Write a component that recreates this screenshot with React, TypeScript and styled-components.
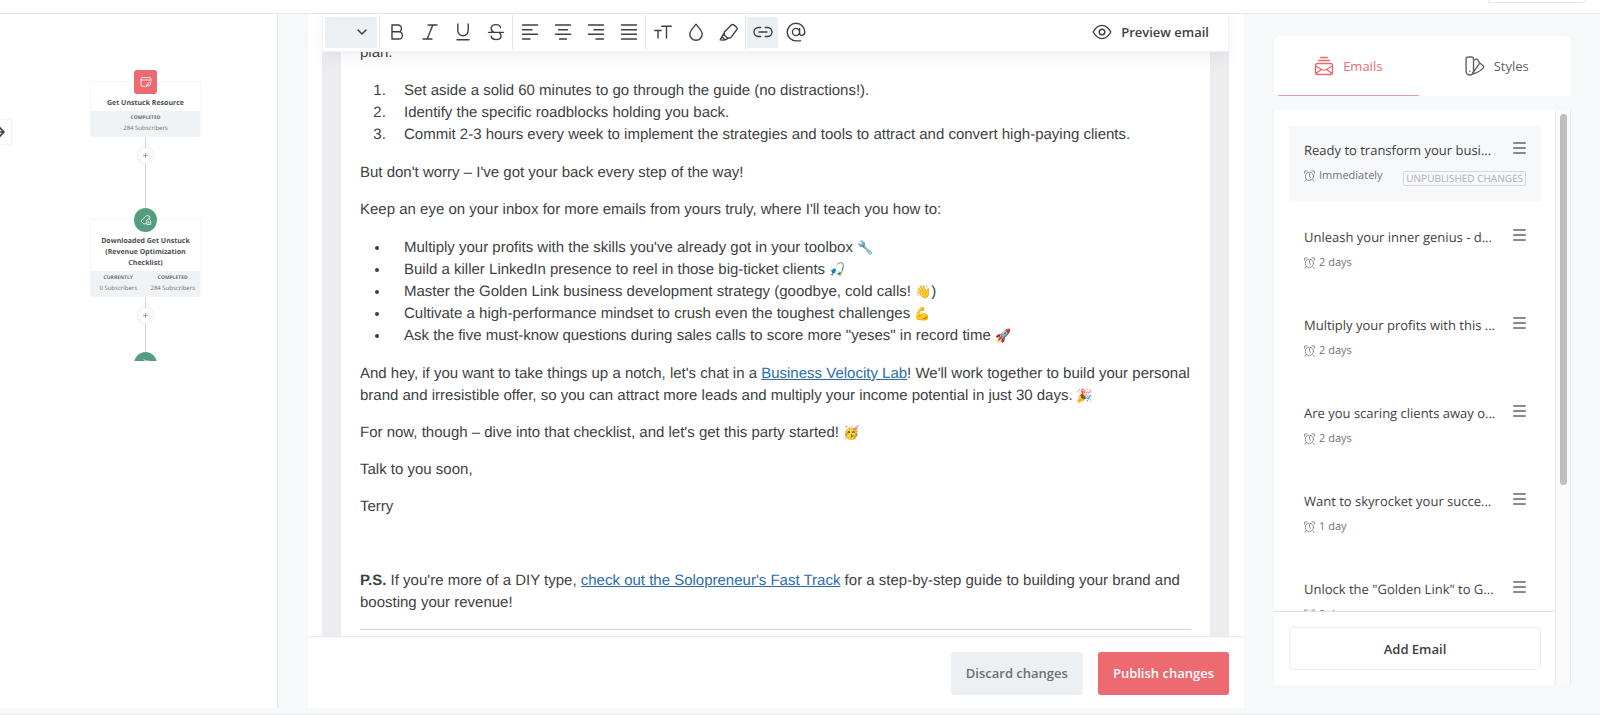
import React from "react";
import styled, { createGlobalStyle, css } from "styled-components";

const sans = `"Open Sans", "Noto Sans", sans-serif`;
const ink = "#3d3f42";
const line = "#e6e8ea";
const canvas = "#f6f8f9";
const coral = "#ec6a70";
const green = "#569d80";

const GlobalStyle = createGlobalStyle`
  *, *::before, *::after { box-sizing: border-box; }
  body { margin: 0; background: ${canvas}; font-family: ${sans}; color: ${ink}; text-rendering: geometricPrecision; }
  button { font: inherit; color: inherit; border: 0; background: none; padding: 0; cursor: pointer; }
  p, ol, ul, h2, h3 { margin: 0; }
`;

const Page = styled.div`
  display: flex;
  flex-direction: column;
  height: 100vh;
  overflow: hidden;
`;

const TopBar = styled.header`
  flex: none;
  display: flex;
  justify-content: flex-end;
  align-items: flex-start;
  height: 14px;
  padding-right: 14px;
  background: #fff;
  border-bottom: 1px solid ${line};
`;

const TopBarButton = styled.button`
  width: 98px;
  height: 3px;
  border: 1px solid ${line};
  border-top: 0;
  border-radius: 0 0 3px 3px;
`;

const Workspace = styled.div`
  flex: 1;
  min-height: 0;
  display: flex;
  padding-bottom: 6px;
  border-bottom: 1px solid ${line};
`;

/* ---------- automation map ---------- */

const MapPanel = styled.section`
  flex: none;
  display: flex;
  align-items: flex-start;
  width: 278px;
  margin-right: 30px;
  background: #fff;
  border-right: 1px solid ${line};
`;

const PanButton = styled.button`
  display: flex;
  align-items: center;
  justify-content: flex-end;
  width: 12px;
  height: 26px;
  margin-top: 105px;
  padding-right: 6px;
  border: 1px solid #f2f3f4;
  border-left: 0;
  overflow: hidden;
  svg { flex: none; }
`;

const Flow = styled.div`
  flex: none;
  display: flex;
  flex-direction: column;
  align-items: center;
  width: 111px;
  height: 347px;
  margin-left: 78px;
  padding-top: 56px;
  overflow: hidden;
`;

const NodeMark = styled.span<{ $round?: boolean }>`
  flex: none;
  position: relative;
  display: grid;
  place-items: center;
  width: 23px;
  height: 24px;
  margin-bottom: -13px;
  color: #fff;
  background: ${(p) => (p.$round ? green : coral)};
  border-radius: ${(p) => (p.$round ? "50%" : "3px")};
`;

const NodeCard = styled.article`
  flex: none;
  width: 100%;
  padding-top: 16px;
  background: #fff;
  border: 1px solid #f4f5f6;
  text-align: center;
`;

const NodeTitle = styled.h3`
  padding: 0 4px 2px;
  font-size: 7px;
  line-height: 11px;
  font-weight: 700;
  color: #4a4d50;
`;

const NodeStats = styled.div`
  display: flex;
  height: 25px;
  padding-top: 2px;
  background: #f0f3f5;
`;

const NodeStat = styled.div`
  flex: 1;
  font-size: 6px;
  line-height: 10px;
  color: #6d7073;
  white-space: nowrap;
`;

const StatLabel = styled.div`
  font-size: 5px;
  font-weight: 700;
`;

const Connector = styled.span<{ $size: number }>`
  flex: none;
  width: 1px;
  height: ${(p) => p.$size}px;
  background: #d5d7d9;
`;

const AddStep = styled.button`
  flex: none;
  display: grid;
  place-items: center;
  width: 15px;
  height: 15px;
  border-radius: 50%;
  background: #fff;
  box-shadow: 0 0 3px rgba(60, 70, 80, 0.2);
  color: #7b7e81;
`;

/* ---------- editor ---------- */

const Editor = styled.main`
  flex: 1;
  min-width: 0;
  display: flex;
  flex-direction: column;
  background: #fff;
`;

const EditorBody = styled.div`
  flex: 1;
  min-height: 0;
  display: flex;
  flex-direction: column;
  margin: 0 15px 0 14px;
`;

const Toolbar = styled.div`
  flex: none;
  position: relative;
  display: flex;
  align-items: center;
  height: 38px;
  padding-bottom: 1px;
  background: #fff;
  border: 1px solid #f0f2f3;
  border-top: 0;
  box-shadow: 0 6px 14px rgba(60, 70, 80, 0.07);
`;

const BlockPicker = styled.button`
  display: flex;
  align-items: center;
  justify-content: flex-end;
  width: 52px;
  height: 31px;
  margin: 0 2px;
  padding-right: 9px;
  background: #edf0f3;
`;

const ToolGroup = styled.div`
  display: flex;
  align-items: center;
  height: 35px;
  border-left: 1px solid #e3e7e9;
`;

const Tool = styled.button<{ $active?: boolean }>`
  display: grid;
  place-items: center;
  width: 33px;
  height: 31px;
  ${(p) =>
    p.$active &&
    css`
      background: #edf0f3;
      background-clip: content-box;
      padding: 0 1px;
    `}
`;

const PreviewButton = styled.button`
  display: flex;
  align-items: center;
  gap: 9px;
  margin-left: auto;
  padding-right: 19px;
  font-size: 13px;
  line-height: 20px;
  font-weight: 600;
`;

const Scroller = styled.div`
  flex: 1;
  min-height: 0;
  display: flex;
  flex-direction: column;
  justify-content: flex-end;
  overflow: hidden;
  padding: 0 19px;
  background: #ededf1;
`;

const Letter = styled.article`
  flex: none;
  padding: 0 19px;
  background: #fff;
  font-family: "Liberation Sans", Arial, sans-serif;
  font-size: 15px;
  line-height: 22px;
  a { color: #2b6cb0; text-decoration: underline; }
  p { margin: 15px 0; }
  ol, ul { margin: 16px 0; padding-left: 30px; }
  li { padding-left: 14px; }
`;

const Emoji = styled.span`
  font-size: 13px;
  line-height: 20px;
`;

const Rule = styled.hr`
  height: 1px;
  margin: 15px 0 6px;
  border: 0;
  background: #cfd1d3;
`;

const ActionBar = styled.footer`
  flex: none;
  display: flex;
  justify-content: flex-end;
  gap: 15px;
  height: 72px;
  padding: 15px 15px 0;
  border-top: 1px solid ${line};
`;

const ActionButton = styled.button<{ $primary?: boolean }>`
  height: 43px;
  padding: 0 15px 2px;
  border-radius: 3px;
  font-size: 13px;
  font-weight: 600;
  color: ${(p) => (p.$primary ? "#fff" : "#6b6f73")};
  background: ${(p) => (p.$primary ? coral : "#edf0f3")};
`;

/* ---------- sidebar ---------- */

const Sidebar = styled.aside`
  flex: none;
  display: flex;
  flex-direction: column;
  gap: 14px;
  width: 297px;
  margin: 22px 29px 23px 30px;
`;

const Tabs = styled.div`
  flex: none;
  display: flex;
  height: 60px;
  background: #fff;
  border-radius: 6px;
`;

const Tab = styled.button<{ $active?: boolean }>`
  flex: 1;
  display: flex;
  align-items: center;
  justify-content: center;
  gap: 9px;
  margin: 0 4px;
  font-size: 13px;
  font-weight: 500;
  color: ${(p) => (p.$active ? coral : "#606366")};
  border-bottom: 1px solid ${(p) => (p.$active ? "#e3a3a5" : "transparent")};
`;

const ListPanel = styled.div`
  flex: 1;
  min-height: 0;
  display: flex;
`;

const ListCard = styled.div`
  flex: 1;
  min-width: 0;
  display: flex;
  flex-direction: column;
  background: #fff;
`;

const EmailList = styled.ul`
  flex: 1;
  min-height: 0;
  display: flex;
  flex-direction: column;
  gap: 12px;
  padding: 16px 14px 0 15px;
  list-style: none;
  overflow: hidden;
`;

const EmailRow = styled.li<{ $selected?: boolean }>`
  flex: none;
  display: flex;
  flex-direction: column;
  gap: 6px;
  height: ${(p) => (p.$selected ? 75 : 76)}px;
  padding: 14px 15px 0;
  background: ${(p) => (p.$selected ? canvas : "transparent")};
`;

const RowLine = styled.div`
  display: flex;
  align-items: center;
  justify-content: space-between;
  height: 20px;
`;

const EmailTitle = styled.h3`
  font-size: 13px;
  line-height: 20px;
  font-weight: 400;
  white-space: nowrap;
`;

const DragHandle = styled.button`
  display: grid;
  height: 16px;
  color: #606366;
`;

const Delay = styled.span`
  display: flex;
  align-items: center;
  gap: 4px;
  font-size: 11px;
  line-height: 18px;
  color: #707376;
`;

const Badge = styled.span`
  margin-top: 4px;
  padding: 0 2px;
  border: 1px solid #d5d8db;
  border-radius: 2px;
  font-size: 10px;
  line-height: 13px;
  font-weight: 500;
  color: #aeb1b4;
`;

const AddArea = styled.div`
  flex: none;
  display: flex;
  padding: 15px 14px 15px 15px;
  border-top: 1px solid #dfe1e3;
`;

const AddButton = styled.button`
  flex: 1;
  height: 43px;
  border: 1px solid #eaecee;
  border-radius: 4px;
  font-size: 13px;
  font-weight: 600;
`;

const Track = styled.div`
  flex: none;
  width: 16px;
  padding: 4px 3px 0 4px;
  background: #fafafa;
  border: solid #e9ebec;
  border-width: 0 1px;
`;

const Thumb = styled.div`
  height: 65%;
  border-radius: 4px;
  background: #bfbfbf;
`;

/* ---------- icons ---------- */

type IconProps = {
  w?: number;
  h?: number;
  box?: string;
  stroke?: number;
  children: React.ReactNode;
};

const Icon = ({ w = 20, h = 20, box = "0 0 20 20", stroke = 1.4, children }: IconProps) => (
  <svg
    width={w}
    height={h}
    viewBox={box}
    fill="none"
    stroke="currentColor"
    strokeWidth={stroke}
    strokeLinecap="round"
    strokeLinejoin="round"
    aria-hidden="true"
  >
    {children}
  </svg>
);

const toolGroups: { label: string; active?: boolean; art: React.ReactNode }[][] = [
  [
    { label: "Bold", art: <path d="M5 3h6a3.4 3.4 0 0 1 0 6.8H5zM5 9.8h6.8a3.6 3.6 0 0 1 0 7.2H5z" /> },
    { label: "Italic", art: <path d="M8 3h9M3 17h9M12.8 3 7.2 17" /> },
    { label: "Underline", art: <path d="M4.8 2v6.6a5.2 5.2 0 0 0 10.4 0V2M4 17.8h12" /> },
    {
      label: "Strikethrough",
      art: <path d="M2.5 10.4h15M14.6 5.6C14.2 3.6 12.6 2.6 10 2.6c-2.8 0-4.8 1.4-4.8 3.9 0 1.7 1 3 3 3.9M5.2 14.2c.3 2.2 2.1 3.4 4.9 3.4s4.9-1.3 4.9-3.7c0-1.5-.7-2.7-2-3.5" />,
    },
  ],
  [
    { label: "Align left", art: <path d="M2.5 3h15M2.5 7.7h9.5M2.5 12.3h15M2.5 17h7.5" /> },
    { label: "Align centre", art: <path d="M2.5 3h15M5.5 7.7h9M2.5 12.3h15M6.5 17h7" /> },
    { label: "Align right", art: <path d="M2.5 3h15M8 7.7h9.5M2.5 12.3h15M10 17h7.5" /> },
    { label: "Justify", art: <path d="M2.5 3h15M2.5 7.7h15M2.5 12.3h15M2.5 17h15" /> },
  ],
  [
    { label: "Text size", art: <path d="M8.8 4.2h9.5M13.5 4.2v11.8M1.8 8.5h6.4M5 8.5V16" /> },
    { label: "Colour", art: <path d="M10 2.3c2.2 2.5 6.2 6.6 6.2 9.8a6.2 6.2 0 0 1-12.4 0c0-3.2 4-7.3 6.2-9.8z" /> },
    {
      label: "Highlight",
      art: <path d="m5.400 10 6.900-7q1.200-1 2.400-.1l2.900 2.300q1.200 1.100.2 2.400l-6 8-2.900.7-3.600-3zM5.300 13.300 4.400 12l-1.300 2.400-1.900 3.500 4.300.2 3.400-1.800M3 14.600l2.600 3.200" />,
    },
  ],
  [
    { label: "Link", active: true, art: <path d="M7.700 14.500H5.500a4.500 4.500 0 0 1 0-9h2.200M12.300 5.500h2.200a4.500 4.500 0 0 1 0 9h-2.200M6 10h8" /> },
    {
      label: "Personalise",
      art: <path d="M13.600 10a3.600 3.600 0 1 1-7.200 0 3.600 3.600 0 0 1 7.200 0zM13.600 6.400v5c0 3 5.200 2.700 5.200-1.400A8.800 8.800 0 1 0 10 18.900h4.600" />,
    },
  ],
];

const Clock = () => (
  <Icon w={11} h={12} box="0 0 11 12" stroke={0.8}>
    <path d="M9.600 6.300a4.100 4.100 0 1 1-8.200 0 4.100 4.100 0 0 1 8.200 0zM5.500 3.800v2.700l1.300 1M.6 3.200V1h2.600M10.400 3.200V1H7.800M2 10 .900 11.400M9 10l1.100 1.400" />
  </Icon>
);

const Plus = () => (
  <Icon w={5} h={5} box="0 0 5 5" stroke={0.7}>
    <path d="M2.500.300v4.400M.300 2.500h4.400" />
  </Icon>
);

const TagArt = () => (
  <Icon w={12} h={12} box="0 0 12 12" stroke={0.8}>
    <path d="M6 9.800H3.600L1.700 7.900q-.8-.9 0-1.700L5.700 2.200q.5-.5 1.200-.5l2 .2q.7.100.7.800v2M6.800 6.500v3.900h3.800V6.500L8.700 5zM8.700 7.500v1.400" />
  </Icon>
);

/* ---------- data ---------- */

const emails = [
  { title: "Ready to transform your busi...", delay: "Immediately", selected: true },
  { title: "Unleash your inner genius - d...", delay: "2 days" },
  { title: "Multiply your profits with this ...", delay: "2 days" },
  { title: "Are you scaring clients away o...", delay: "2 days" },
  { title: "Want to skyrocket your succe...", delay: "1 day" },
  { title: 'Unlock the "Golden Link" to G...', delay: "2 days" },
];

export default function App() {
  return (
    <>
      <GlobalStyle />
      <Page>
        <TopBar>
          <TopBarButton aria-label="Close editor" />
        </TopBar>
        <Workspace>
          <MapPanel>
            <PanButton aria-label="Next path">
              <Icon w={16} h={12} box="0 0 16 12" stroke={1.7}>
                <path d="M0 6h15M10 1l5 5-5 5" />
              </Icon>
            </PanButton>
            <Flow>
              <NodeMark>
                <Icon w={12} h={12} box="0 0 12 12" stroke={0.8}>
                  <path d="M5 10.300H2q-1 0-1-1V2.600q0-1 1-1h8q1 0 1 1V5M1 4h10M6.500 9.900c0-2 1.500-3.400 4.200-3.500.3 2.600-1.400 4-3.200 3.500zM5.800 11l2.700-2.600" />
                </Icon>
              </NodeMark>
              <NodeCard>
                <NodeTitle>Get Unstuck Resource</NodeTitle>
                <NodeStats>
                  <NodeStat>
                    <StatLabel>COMPLETED</StatLabel>
                    284 Subscribers
                  </NodeStat>
                </NodeStats>
              </NodeCard>
              <Connector $size={11} />
              <AddStep aria-label="Add step"><Plus /></AddStep>
              <Connector $size={45} />
              <NodeMark $round><TagArt /></NodeMark>
              <NodeCard>
                <NodeTitle>Downloaded Get Unstuck (Revenue Optimization Checklist)</NodeTitle>
                <NodeStats>
                  <NodeStat>
                    <StatLabel>CURRENTLY</StatLabel>
                    0 Subscribers
                  </NodeStat>
                  <NodeStat>
                    <StatLabel>COMPLETED</StatLabel>
                    284 Subscribers
                  </NodeStat>
                </NodeStats>
              </NodeCard>
              <Connector $size={11} />
              <AddStep aria-label="Add step"><Plus /></AddStep>
              <Connector $size={29} />
              <NodeMark $round>
                <Icon w={12} h={12} box="0 0 12 12" stroke={0.8}>
                  <path d="M4 1.500 5.500 3 8.500 3M4 4l1.500-1M2 8h8" />
                </Icon>
              </NodeMark>
            </Flow>
          </MapPanel>

          <Editor>
            <EditorBody>
              <Toolbar>
                <BlockPicker aria-label="Block style">
                  <Icon w={12} h={8} box="0 0 12 8" stroke={1.5}>
                    <path d="m2 2 4 4 4-4" />
                  </Icon>
                </BlockPicker>
                {toolGroups.map((group) => (
                  <ToolGroup key={group[0].label}>
                    {group.map((tool) => (
                      <Tool key={tool.label} aria-label={tool.label} $active={tool.active}>
                        <Icon>{tool.art}</Icon>
                      </Tool>
                    ))}
                  </ToolGroup>
                ))}
                <PreviewButton>
                  <Icon>
                    <path d="M1.200 10c2.400-4.400 5.300-6.600 8.800-6.600s6.400 2.200 8.800 6.600c-2.400 4.400-5.300 6.600-8.800 6.600S3.600 14.400 1.200 10zM12.800 10a2.800 2.800 0 1 1-5.600 0 2.800 2.800 0 0 1 5.600 0z" />
                  </Icon>
                  Preview email
                </PreviewButton>
              </Toolbar>
              <Scroller>
                <Letter>
                  <p>plan.</p>
                  <ol>
                    <li>Set aside a solid 60 minutes to go through the guide (no distractions!).</li>
                    <li>Identify the specific roadblocks holding you back.</li>
                    <li>Commit 2-3 hours every week to implement the strategies and tools to attract and convert high-paying clients.</li>
                  </ol>
                  <p>But don't worry – I've got your back every step of the way!</p>
                  <p>Keep an eye on your inbox for more emails from yours truly, where I'll teach you how to:</p>
                  <ul>
                    <li>Multiply your profits with the skills you've already got in your toolbox <Emoji>🔧</Emoji></li>
                    <li>Build a killer LinkedIn presence to reel in those big-ticket clients <Emoji>🎣</Emoji></li>
                    <li>Master the Golden Link business development strategy (goodbye, cold calls! <Emoji>👋</Emoji>)</li>
                    <li>Cultivate a high-performance mindset to crush even the toughest challenges <Emoji>💪</Emoji></li>
                    <li>Ask the five must-know questions during sales calls to score more "yeses" in record time <Emoji>🚀</Emoji></li>
                  </ul>
                  <p>
                    And hey, if you want to take things up a notch, let's chat in a{" "}
                    <a href="#lab">Business Velocity Lab</a>! We'll work together to build your personal brand and
                    irresistible offer, so you can attract more leads and multiply your income potential in just 30
                    days. <Emoji>🎉</Emoji>
                  </p>
                  <p>For now, though – dive into that checklist, and let's get this party started! <Emoji>🥳</Emoji></p>
                  <p>Talk to you soon,</p>
                  <p>Terry</p>
                  <p>&nbsp;</p>
                  <p>
                    <strong>P.S.</strong> If you're more of a DIY type,{" "}
                    <a href="#fast-track">check out the Solopreneur's Fast Track</a> for a step-by-step guide to
                    building your brand and boosting your revenue!
                  </p>
                  <Rule />
                </Letter>
              </Scroller>
            </EditorBody>
            <ActionBar>
              <ActionButton>Discard changes</ActionButton>
              <ActionButton $primary>Publish changes</ActionButton>
            </ActionBar>
          </Editor>

          <Sidebar>
            <Tabs role="tablist">
              <Tab role="tab" aria-selected="true" $active>
                <Icon>
                  <path d="M6.500 1.500h7M4.500 4.500h11M3.500 7.500h13q2 0 2 2v7q0 2-2 2h-13q-2 0-2-2v-7q0-2 2-2zM1.800 10l6 3.500q2.200 1.300 4.400 0l6-3.500M2 17.500l5-3.800M18 17.500l-5-3.800" />
                </Icon>
                Emails
              </Tab>
              <Tab role="tab" aria-selected="false">
                <Icon>
                  <path d="M3 1h3.500q2 0 2 2v12.300a3.700 3.700 0 0 1-7.400 0V3q0-2 2-2zM8.500 4.500l2.500-1.300q1-.4 1.600.4l1.700 2.800q.5.900-.2 1.800L7.300 17.500M14.200 6.500l4 3.300q.8.800.3 1.700-2 3.500-10.500 6.500M4.800 15.300h.1" />
                </Icon>
                Styles
              </Tab>
            </Tabs>
            <ListPanel>
              <ListCard>
                <EmailList>
                  {emails.map((email) => (
                    <EmailRow key={email.title} $selected={email.selected}>
                      <RowLine>
                        <EmailTitle>{email.title}</EmailTitle>
                        <DragHandle aria-label="Reorder">
                          <Icon w={13} h={12} box="0 0 13 12" stroke={1.3}>
                            <path d="M.7 1h11.600M.7 6h11.600M.7 11h11.600" />
                          </Icon>
                        </DragHandle>
                      </RowLine>
                      <RowLine>
                        <Delay><Clock />{email.delay}</Delay>
                        {email.selected && <Badge>UNPUBLISHED CHANGES</Badge>}
                      </RowLine>
                    </EmailRow>
                  ))}
                </EmailList>
                <AddArea>
                  <AddButton>Add Email</AddButton>
                </AddArea>
              </ListCard>
              <Track><Thumb /></Track>
            </ListPanel>
          </Sidebar>
        </Workspace>
      </Page>
    </>
  );
}
